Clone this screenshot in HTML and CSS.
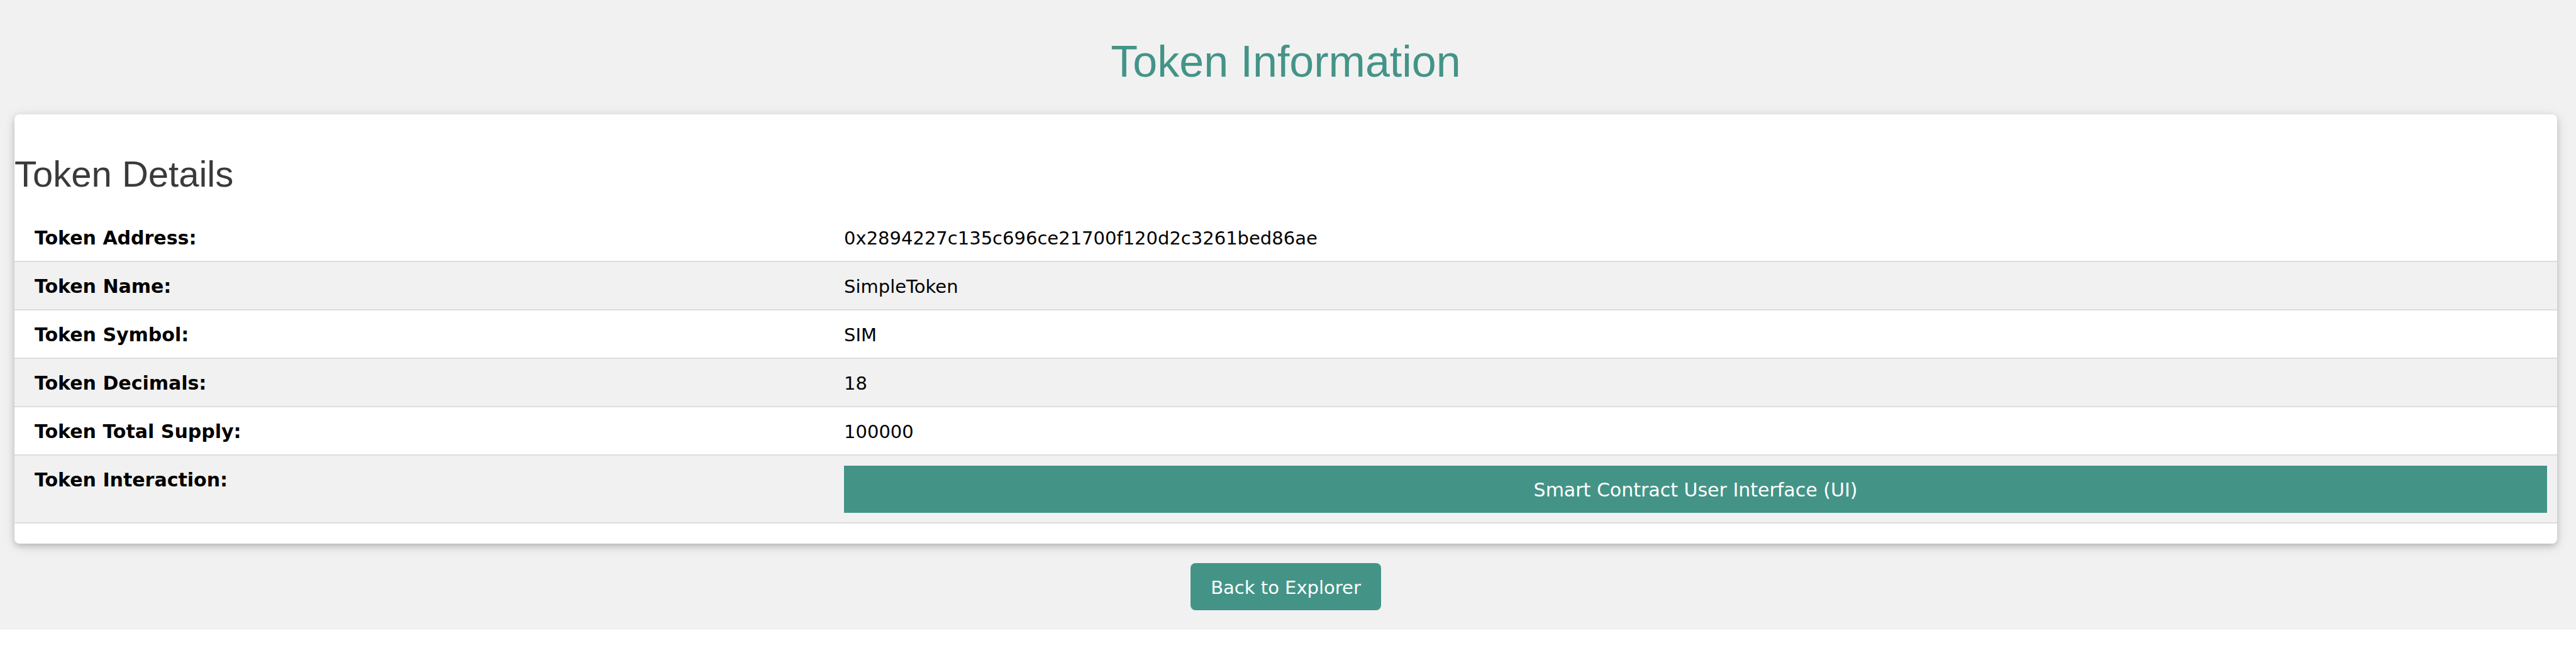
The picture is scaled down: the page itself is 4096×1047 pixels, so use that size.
FILE: index.html
```
<!DOCTYPE html>
<html lang="en">
<head>
<meta charset="utf-8">
<title>Token Information</title>
<link rel="stylesheet" href="styles.css">
</head>
<body>
<main class="page">
  <h1 class="page-title">Token Information</h1>
  <section class="card">
    <h2 class="card-title">Token Details</h2>
    <table class="details">
      <tbody>
        <tr><th scope="row">Token Address:</th><td>0x2894227c135c696ce21700f120d2c3261bed86ae</td></tr>
        <tr><th scope="row">Token Name:</th><td>SimpleToken</td></tr>
        <tr><th scope="row">Token Symbol:</th><td>SIM</td></tr>
        <tr><th scope="row">Token Decimals:</th><td>18</td></tr>
        <tr><th scope="row">Token Total Supply:</th><td>100000</td></tr>
        <tr><th scope="row">Token Interaction:</th><td class="action"><a class="button button-block" href="#interact">Smart Contract User Interface (UI)</a></td></tr>
      </tbody>
    </table>
  </section>
  <a class="button button-round" href="#explorer">Back to Explorer</a>
</main>
</body>
</html>
```
FILE: styles.css
```
* {
  box-sizing: border-box;
}

body {
  margin: 0;
  background: #fff;
  color: #000;
  font: 29px/44px Verdana, "DejaVu Sans", sans-serif;
}

.page {
  display: flex;
  flex-direction: column;
  align-items: center;
  padding: 46px 30px 31px 23px;
  background: #f1f1f1;
}

.page-title,
.card-title {
  font-family: "Liberation Sans", Arial, sans-serif;
  font-weight: 400;
}

.page-title {
  margin: 0 0 31px;
  font-size: 70px;
  line-height: 105px;
  color: #439487;
}

.card {
  width: 100%;
  margin-bottom: 31px;
  padding: 31px 0 32px;
  background: #fff;
  border-radius: 8px;
  box-shadow: 0 4px 10px rgba(0, 0, 0, 0.16), 0 4px 20px rgba(0, 0, 0, 0.12);
}

.card-title {
  margin: 20px 0 19px;
  font-size: 58px;
  line-height: 88px;
  color: #3a3a3a;
}

.details {
  width: 100%;
  table-layout: fixed;
  border-collapse: separate;
  border-spacing: 0;
}

.details th,
.details td {
  padding: 17px 16px 14px;
  border-bottom: 2px solid #ddd;
  text-align: left;
  vertical-align: top;
}

.details th {
  width: 32.23%;
  padding-left: 32px;
  font-size: 30px;
  font-weight: 700;
}

.details tr:nth-child(even) {
  background: #f1f1f1;
}

.details .action {
  padding: 16px 16px 15px;
}

.button {
  padding: 17px 32px 14px;
  background: #439487;
  color: #fff;
  text-align: center;
  text-decoration: none;
}

.button-block {
  display: block;
  font-size: 30px;
}

.button-round {
  border-radius: 8px;
}
```
